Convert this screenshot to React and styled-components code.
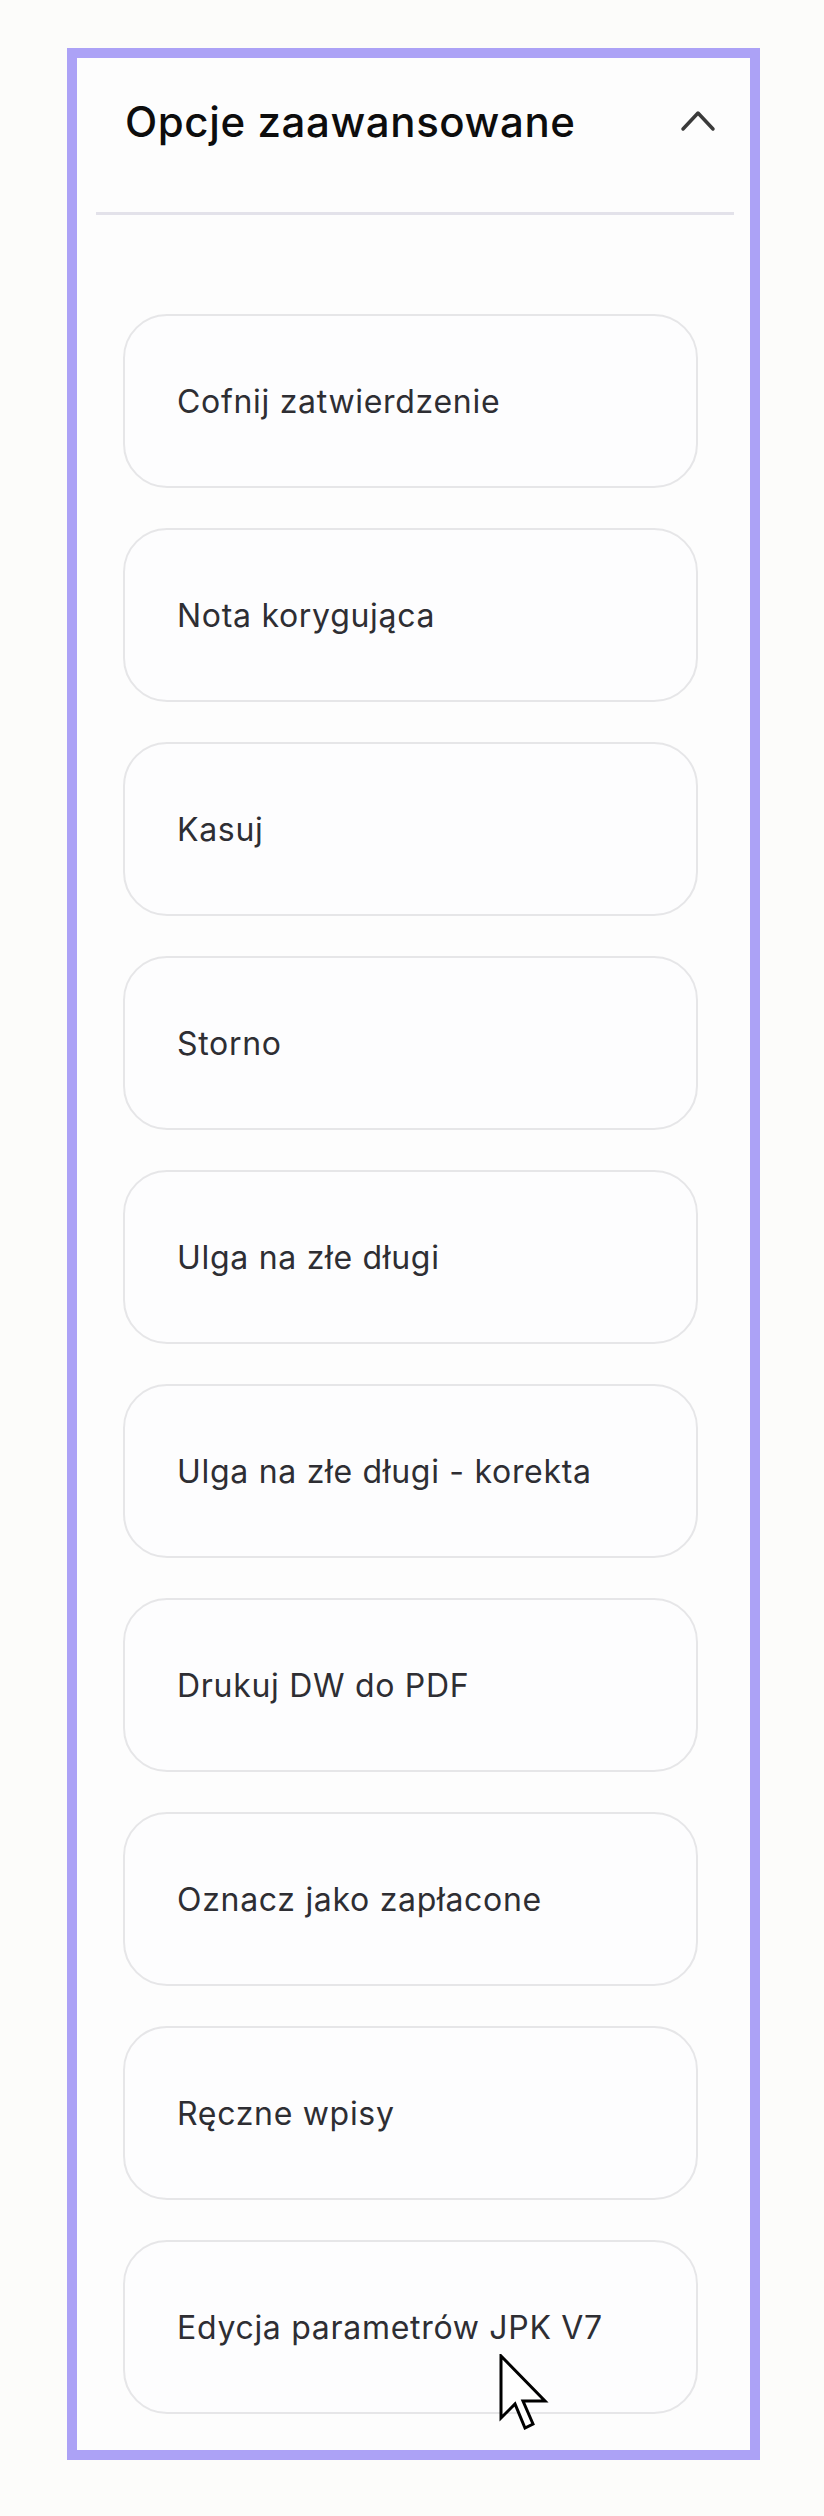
import React from 'react';
import styled, { createGlobalStyle } from 'styled-components';

const options = [
  'Cofnij zatwierdzenie',
  'Nota korygująca',
  'Kasuj',
  'Storno',
  'Ulga na złe długi',
  'Ulga na złe długi - korekta',
  'Drukuj DW do PDF',
  'Oznacz jako zapłacone',
  'Ręczne wpisy',
  'Edycja parametrów JPK V7',
];

const App = () => {
  return (
    <>
      <GlobalStyle />
      <Page>
        <Panel>
          <Header>
            <Title>Opcje zaawansowane</Title>
            <Chevron width="36" height="22" viewBox="0 0 36 22">
              <path d="M3 19 L18 3 L33 19" />
            </Chevron>
          </Header>
          <Divider />
          <List>
            {options.map((label, i) => (
              <Item key={label}>
                {label}
                {i === options.length - 1 && (
                  <Cursor width="50" height="76" viewBox="0 0 50 76">
                    <path d="M2 2 L2 64 L16 50 L26 74 L34 70 L24 47 L46 47 Z" />
                  </Cursor>
                )}
              </Item>
            ))}
          </List>
        </Panel>
      </Page>
    </>
  );
};

export default App;

const GlobalStyle = createGlobalStyle`
  html, body {
    margin: 0;
    padding: 0;
    background: #fcfcfa;
  }
  body {
    font-family: Inter, "Liberation Sans", sans-serif;
  }
`;

const Page = styled.div`
  padding: 48px 64px 53px 67px;
`;

const Panel = styled.div`
  width: 693px;
  box-sizing: border-box;
  border: 10px solid #aca2f6;
  background: #fdfdfd;
  padding: 0 0 36px;
`;

const Header = styled.div`
  height: 154px;
  display: flex;
  align-items: flex-start;
  justify-content: space-between;
  padding: 38px 34px 0 48px;
  box-sizing: border-box;
`;

const Title = styled.h2`
  margin: 0;
  font-size: 42px;
  line-height: 52px;
  font-weight: 500;
  color: #0d0d0d;
  letter-spacing: 0.6px;
`;

const Chevron = styled.svg`
  margin-top: 14px;
  fill: none;
  stroke: #3a3a3a;
  stroke-width: 3.5;
  stroke-linecap: round;
  stroke-linejoin: round;
`;

const Divider = styled.div`
  height: 3px;
  margin: 0 16px 0 19px;
  background: #e3e2ea;
`;

const List = styled.div`
  display: flex;
  flex-direction: column;
  gap: 40px;
  padding: 99px 52px 0 46px;
`;

const Item = styled.div`
  position: relative;
  height: 174px;
  display: flex;
  align-items: center;
  padding: 0 52px;
  box-sizing: border-box;
  border: 2px solid #e6e6e8;
  border-radius: 44px;
  background: #fdfdfe;
  font-size: 32px;
  letter-spacing: 0.7px;
  color: #2e2e33;
`;

const Cursor = styled.svg`
  position: absolute;
  left: 374px;
  top: 112px;
  fill: #fff;
  stroke: #000;
  stroke-width: 3;
  stroke-linejoin: miter;
`;
